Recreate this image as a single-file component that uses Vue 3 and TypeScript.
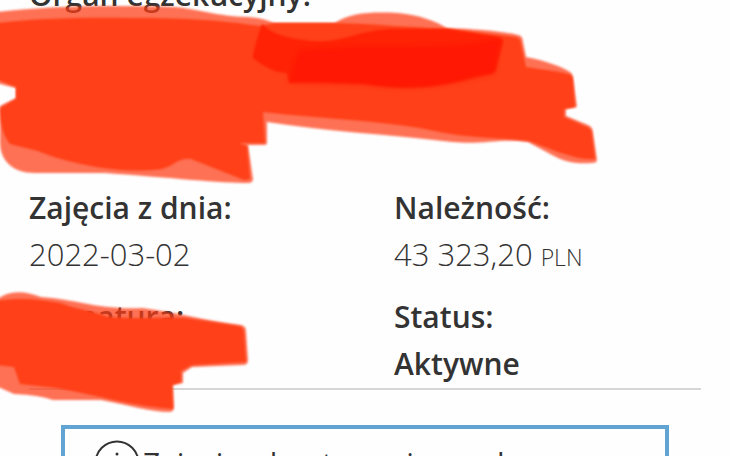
<script setup lang="ts">
interface Field {
  label: string
  value: string
  unit?: string
  strong?: boolean
}

const authority = 'Organ egzekucyjny:'
const fields: Field[] = [
  { label: 'Zajęcia z dnia:', value: '2022-03-02' },
  { label: 'Należność:', value: '43 323,20', unit: 'PLN' },
  { label: 'Sygnatura:', value: '' },
  { label: 'Status:', value: 'Aktywne', strong: true },
]
const notice = 'Zajęcie z konta może zwolna'
</script>

<template>
  <main class="page">
    <section class="details">
      <h2 class="label authority">{{ authority }}</h2>
      <dl class="grid">
        <div v-for="field in fields" :key="field.label" class="field">
          <dt class="label">{{ field.label }}</dt>
          <dd class="value" :class="{ strong: field.strong }">
            {{ field.value }} <span v-if="field.unit" class="unit">{{ field.unit }}</span>
          </dd>
        </div>
      </dl>
    </section>
    <aside class="notice">
      <svg class="info" viewBox="0 0 46 46" aria-hidden="true">
        <circle cx="23" cy="23" r="21.5" fill="none" stroke="#333" stroke-width="2" />
        <circle cx="23" cy="14" r="1.5" fill="#333" />
        <path d="M19 20h4v14M18 34h10" fill="none" stroke="#333" stroke-width="2" />
      </svg>
      <p class="notice-text">{{ notice }}</p>
    </aside>
    <svg class="marker" width="730" height="456" viewBox="0 0 730 456" aria-hidden="true">
      <g class="wash">
        <path d="M-4 12C50 6 110 5 175 7C204 10 215 16 248 17Q263 18 274 23H335C351 12 373 12 398 13C420 15 435 21 447 28C475 29 500 31 518 35Q523 36 523 42L526 57C547 61 562 67 570 72Q573 74 573 79L577 107L566 109V116L588 125Q593 127 593 133L597 160Q597 163 592 163C574 164 565 162 552 155L528 142C500 138 484 145 452 142C385 134 322 131 267 122L267 143Q267 145 263 145L248 145L253 179Q253 183 248 183C220 183 173 178 105 173H35C12 173 0 160 0 142V106L16 98V88L-4 83Z" />
        <path d="M-4 300Q13 286 41 297C75 299 98 310 142 308C175 312 207 321 241 325Q246 326 246 331L248 360Q248 365 243 365L192 367L183 373V383L173 385L174 407Q174 412 169 412C150 412 129 405 101 400H53Q39 395 14 394L-4 386Z" />
      </g>
      <g class="ink">
        <path d="M-4 23C62 16 112 18 153 18C205 19 231 22 260 26L274 23H335C375 24 407 27 447 29L515 37Q521 38 521 44L526 67C545 70 556 71 568 74Q573 75 573 80L575 107L564 109V117L587 127Q592 129 592 135L595 159C577 160 561 153 529 141C501 137 474 139 439 132C394 121 323 119 263 112L265 143L239 143L247 146L250 179L244 180L191 159C175 157 174 170 152 170C116 173 66 163 38 151L10 144Q0 132 0 108L16 99V87L-4 79Z" />
        <path d="M-4 301C22 297 40 300 60 303C75 309 94 311 108 317C140 319 163 317 185 318L238 326Q244 327 244 333L246 362L192 365L181 371V382L172 385L173 409C147 407 117 401 101 397C86 394 74 391 57 388L20 384L14 367L-4 365Z" />
      </g>
      <g class="overlap">
        <path d="M262 24C273 35 288 38 310 41C340 44 356 31 390 29H447L498 37Q504 38 503 43L496 70Q495 73 490 74L473 77C441 88 404 91 365 84Q322 81 289 83L287 73Q272 73 253 58Q253 50 262 24Z" />
        <path class="deep" d="M299 51C350 43 430 51 478 43L500 39L494 73L469 79C427 90 392 88 365 84L289 82Z" />
      </g>
    </svg>
  </main>
</template>

<style>
body {
  margin: 0;
  background: #fefefe;
}
html {
  overflow: hidden;
}
</style>

<style scoped>
.page {
  position: relative;
  height: 100vh;
  overflow: hidden;
  color: #333;
  font-family: "Open Sans", "Noto Sans", sans-serif;
  font-size: 31px;
  line-height: 47px;
}
.details {
  margin: 0 29px;
  padding-bottom: 1px;
  border-bottom: 2px solid #d6d6d6;
}
.label {
  margin: 0;
  font-size: 30px;
  font-weight: 600;
}
.authority {
  margin-top: -29px;
}
.grid {
  display: grid;
  grid-template-columns: 1fr 307px;
  row-gap: 15px;
  margin: 0;
  padding-top: 166px;
}
.field {
  min-width: 0;
}
.value {
  height: 47px;
  margin: 0;
  font-weight: 300;
}
.strong {
  font-size: 30px;
  font-weight: 600;
}
.unit {
  font-size: 23px;
  line-height: 1;
}
.notice {
  display: flex;
  align-items: center;
  gap: 3px;
  margin: 35px 61px 0;
  padding: 10px 29px;
  border: 4px solid #60a4d3;
}
.info {
  flex: none;
  width: 46px;
  height: 46px;
}
.notice-text {
  margin: 0;
  font-size: 30px;
  font-weight: 400;
  white-space: nowrap;
}
.marker {
  position: absolute;
  top: 0;
  left: 0;
  pointer-events: none;
}
.wash {
  fill: #ff3c14;
  opacity: 0.72;
  filter: blur(1px);
}
.ink {
  fill: #ff4018;
  filter: blur(1px);
}
.overlap {
  fill: #ff2205;
  filter: blur(1px);
}
.deep {
  fill: #ff1803;
  filter: blur(2px);
}
</style>
